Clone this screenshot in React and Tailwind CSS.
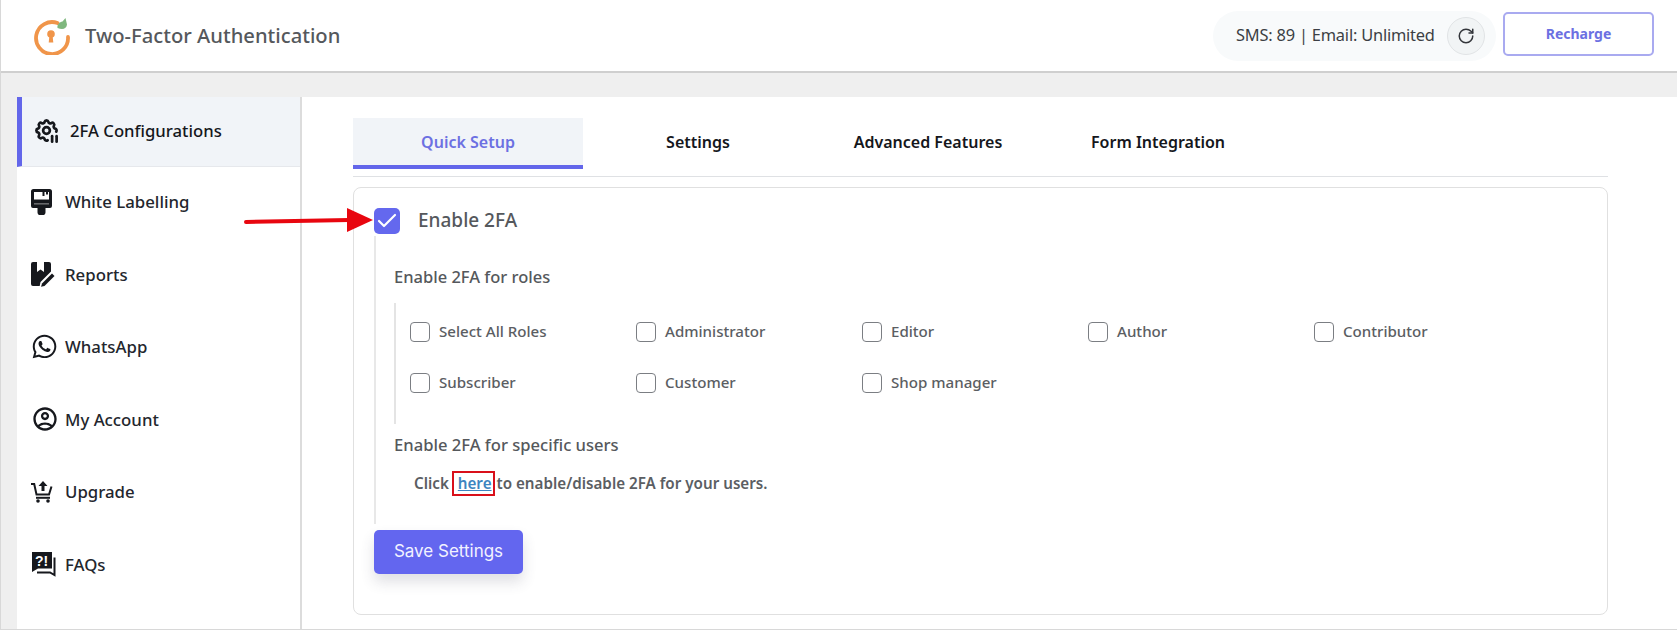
import React from "react";
import { RotateCw, Check } from "lucide-react";
import { TbSettingsPause } from "react-icons/tb";
import { FaWhatsapp } from "react-icons/fa";
import { MdOutlineAccountCircle } from "react-icons/md";

function Logo() {
  return (
    <svg width="38" height="38" viewBox="0 0 38 38" fill="none">
      <path d="M24.500 6A16 16 0 1 0 35 20" stroke="#f0954a" strokeWidth="3.800" strokeLinecap="round" />
      <circle cx="18" cy="17" r="3.800" fill="#f0954a" />
      <path d="M16.400 19h3.200l.7 6.500h-4.600z" fill="#f0954a" />
      <path d="M24.500 11c-.5-3.500 2-6 5-6.500L32.500 1l1.500 6.500c-.5 4-4 6-9.500 3.500z" fill="#7fb77e" />
    </svg>
  );
}

function BrushIcon() {
  return (
    <svg width="21" height="26" viewBox="0 0 21 26" fill="#16181d">
      <path d="M2.500 0h16A2.500 2.500 0 0 1 21 2.500V17a2 2 0 0 1-2 2h-4.500v4.500a3 3 0 0 1-1.500 2.500H8a3 3 0 0 1-1.500-2.500V19H2a2 2 0 0 1-2-2V2.500A2.500 2.500 0 0 1 2.500 0z" />
      <path d="M3 3h8.500v4h2V3h1.500v2.500h2V3h1v7.500H3z" fill="#fff" />
      <rect x="3" y="14" width="15" height="1.600" fill="#fff" opacity="0.35" />
    </svg>
  );
}

function ReportIcon() {
  return (
    <svg width="25" height="26" viewBox="0 0 25 26" fill="#16181d">
      <path d="M2 1h4v10l3.500-2.500L13 11V1h5a2 2 0 0 1 2 2v7.500L9.500 21l-.8 4H2a2 2 0 0 1-2-2V3a2 2 0 0 1 2-2z" />
      <path d="M11 22.500l10-10 2.500 2.500-10 10-3.500.8z" />
    </svg>
  );
}

function UpgradeIcon() {
  return (
    <svg width="22" height="22" viewBox="0 0 22 22" fill="none" stroke="#16181d" strokeWidth="2">
      <path d="M0 3h3.200l2.300 10.500h12.500l2.500-8" />
      <path d="M5 16.800h14" />
      <circle cx="7" cy="20" r="1.800" fill="#16181d" stroke="none" />
      <circle cx="17" cy="20" r="1.800" fill="#16181d" stroke="none" />
      <path d="M12 0l4.500 5h-3v5h-3V5h-3z" fill="#16181d" stroke="none" />
    </svg>
  );
}

function FaqIcon() {
  return (
    <svg width="25" height="25" viewBox="0 0 25 25">
      <path d="M1 0h20v16.500H7L1 20z" fill="#16181d" />
      <text x="4" y="13.500" fontSize="14" fontWeight="700" fontFamily="Liberation Sans" fill="#fff">?!</text>
      <path d="M23.500 5.500V23L19 20.500H6" fill="none" stroke="#16181d" strokeWidth="2" />
    </svg>
  );
}

const navItems = [
  { label: "White Labelling", icon: <BrushIcon /> },
  { label: "Reports", icon: <ReportIcon /> },
  { label: "WhatsApp", icon: <FaWhatsapp size={27} color="#16181d" /> },
  { label: "My Account", icon: <MdOutlineAccountCircle size={28} color="#16181d" /> },
  { label: "Upgrade", icon: <UpgradeIcon /> },
  { label: "FAQs", icon: <FaqIcon /> },
];

const tabs = ["Settings", "Advanced Features", "Form Integration"];

const roles = ["Select All Roles", "Administrator", "Editor", "Author", "Contributor", "Subscriber", "Customer", "Shop manager"];

function Sidebar() {
  return (
    <aside className="w-[285px] shrink-0 bg-white border-r-2 border-[#dcdcdc]">
      <div className="h-[70px] flex items-center bg-[#f1f4f8] border-l-[5px] border-[#6366ea] border-b border-b-[#e6e8ec] pl-[11px] pb-[2px] text-[16.700px] font-medium text-[#15171c]">
        <span className="w-[37px] flex"><TbSettingsPause size={27} color="#16181d" strokeWidth={2.400} /></span>
        2FA Configurations
      </div>
      {navItems.map((item) => (
        <div key={item.label} className="h-[72.500px] flex items-center pl-[14px] pb-[3px] text-[16.800px] font-medium text-[#23262d] first:mt-[-2px]">
          <span className="w-[34px] flex">{item.icon}</span>
          {item.label}
        </div>
      ))}
    </aside>
  );
}

export default function App() {
  return (
    <div className="relative h-[630px] overflow-hidden flex flex-col bg-[#efefef] border-l border-b border-[#d8d8d8] font-['Noto_Sans',sans-serif]">
      <header className="h-[73px] shrink-0 flex items-center justify-between bg-white border-b-2 border-[#cfcfcf] pl-[32px] pr-[23px]">
        <div className="flex items-center gap-[14px]">
          <Logo />
          <span className="text-[20.200px] font-medium text-[#55585c]">Two-Factor Authentication</span>
        </div>
        <div className="flex items-start gap-[7px]">
          <div className="h-[50px] w-[283px] flex items-center justify-between rounded-[25px] bg-[#f8fafb] pl-[23px] pr-[11px] text-[16.400px] tracking-[-0.2px] whitespace-nowrap text-[#3c3f44]">
            SMS: 89 | Email: Unlimited
            <span className="w-[38px] h-[38px] flex items-center justify-center rounded-full bg-[#f1f4f5] border border-[#e1e4e6]">
              <RotateCw size={18} color="#33363b" />
            </span>
          </div>
          <button className="mt-[1px] w-[151px] h-[44px] rounded-[5px] border-2 border-[#a9aaf0] bg-white text-[14px] font-bold text-[#6c70e2]">Recharge</button>
        </div>
      </header>

      <div className="flex-1 flex pt-[24px] pl-[16px] min-h-0">
        <Sidebar />
        <main className="flex-1 bg-white pl-[51px] pr-[69px] pt-[21px]">
          <div className="flex h-[59px] border-b border-[#dfe1e4] items-start">
            <div className="w-[230px] h-[51px] flex items-center justify-center bg-[#f1f4f8] border-b-4 border-[#6366ea] text-[16px] font-semibold text-[#6c70e2]">Quick Setup</div>
            {tabs.map((tab) => (
              <div key={tab} className="w-[230px] h-[51px] flex items-center justify-center text-[16px] font-semibold text-[#15171c] pb-[4px]">{tab}</div>
            ))}
          </div>

          <section className="mt-[10px] h-[428px] rounded-lg border border-[#e0e0e0] pl-[20px] pt-[20px]">
            <div className="flex items-center h-[26px]">
              <span className="w-[26px] h-[26px] flex items-center justify-center rounded-[5px] bg-[#6468ee]">
                <Check size={24} color="#fff" strokeWidth={2.200} />
              </span>
              <span className="ml-[18px] pb-[2px] text-[19px] font-medium text-[#55585c]">Enable 2FA</span>
            </div>

            <div className="mt-[2px] border-l-2 border-[#e8e8e8] pl-[18px] pt-[29px] pb-[29px]">
              <h3 className="h-[24px] leading-[24px] text-[16.500px] font-medium text-[#55585c]">Enable 2FA for roles</h3>
              <div className="mt-[14px] border-l-2 border-[#e4e4e4] pl-[14px] pt-[3px] pb-[16px] grid grid-cols-[repeat(5,226px)] auto-rows-[51px]">
                {roles.map((role) => (
                  <label key={role} className="flex items-center gap-[9px] text-[15.100px] font-medium text-[#5b5e63]">
                    <span className="w-[20px] h-[20px] rounded-[4px] border border-[#7b7e83] bg-white" />
                    {role}
                  </label>
                ))}
              </div>
              <h3 className="mt-[9px] h-[24px] leading-[24px] text-[16.600px] font-medium text-[#55585c]">Enable 2FA for specific users</h3>
              <p className="mt-[14px] h-[24px] leading-[24px] pl-[20px] text-[15.200px] font-semibold text-[#5b5e63]">
                Click{" "}
                <a className="relative ml-[5px] mr-[1px] text-[#3d85c0] underline">
                  here
                  <span className="absolute left-[-6px] right-[-3px] top-[-2px] bottom-[-3px] border-2 border-[#d9101a]" />
                </a>{" "}
                to enable/disable 2FA for your users.
              </p>
            </div>

            <button className="mt-[6px] w-[149px] h-[44px] rounded-[5px] bg-[#6366ef] text-[17px] font-normal text-[#f2f2ff] shadow-[0_8px_14px_rgba(60,60,90,0.16)] font-['Inter',sans-serif]">Save Settings</button>
          </section>
        </main>
      </div>

      {/* annotation arrow */}
      <svg className="absolute left-[242px] top-[205px]" width="132" height="30" viewBox="0 0 132 30">
        <path d="M3 17L106 15" stroke="#e8060f" strokeWidth="4" strokeLinecap="round" />
        <path d="M104 3L130 15L104 27z" fill="#e8060f" />
      </svg>
    </div>
  );
}
